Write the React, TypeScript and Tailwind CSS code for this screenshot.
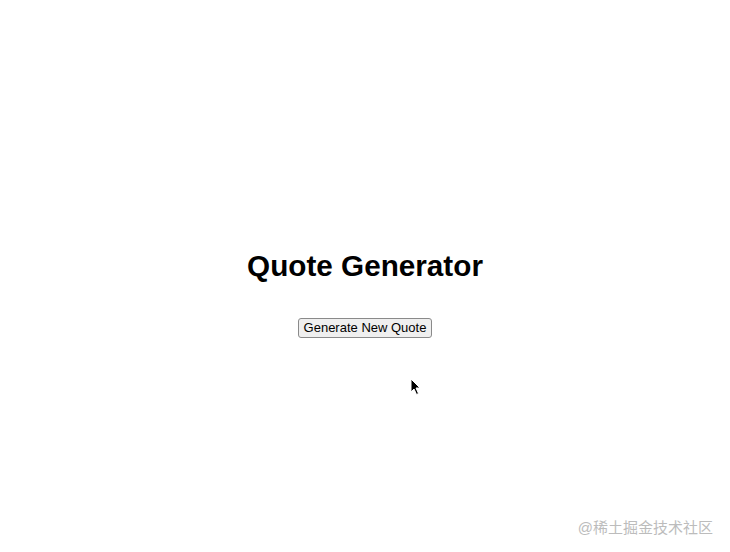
import { useState } from "react";

const quotes = [
  "The best way to get started is to quit talking and begin doing.",
  "Don't let yesterday take up too much of today.",
  "It's not whether you get knocked down, it's whether you get up.",
];

// small arrow pointer drawn over the page
const Pointer = () => (
  <svg width="11" height="18" viewBox="0 0 11 18" className="absolute left-[410px] top-[378px]">
    <path d="M1 1 L1 14 L4 11 L6.5 16.5 L8.5 15.5 L6 10 L10 10 Z" fill="#000" stroke="#fff" strokeWidth="1" />
  </svg>
);

export default function App() {
  const [quote, setQuote] = useState("");

  const handleClick = () => {
    setQuote(quotes[Math.floor(Math.random() * quotes.length)]);
  };

  return (
    <div className="relative w-full h-[552px] bg-white overflow-hidden">
      <div className="flex flex-col items-center pt-[248px]">
        <h1 className="text-[29.7px] leading-[36px] font-bold text-black font-['Liberation_Sans',Arial,sans-serif]">
          Quote Generator
        </h1>
        <button
          onClick={handleClick}
          className="mt-[34px] h-[20px] px-[5px] bg-[#efefef] border border-[#8a8a8a] rounded-[3px] text-[13px] leading-[16px] text-black font-['Liberation_Sans',Arial,sans-serif]"
        >
          Generate New Quote
        </button>
        {quote && (
          <p className="mt-4 text-[16px] text-black font-['Liberation_Sans',Arial,sans-serif]">{quote}</p>
        )}
      </div>

      <Pointer />

      {/* watermark */}
      <div className="absolute right-[17px] bottom-[14px] text-[15px] leading-[20px] text-[#bcbcbc] font-['Liberation_Sans','Noto_Sans_CJK_SC',sans-serif]">
        @稀土掘金技术社区
      </div>
    </div>
  );
}
